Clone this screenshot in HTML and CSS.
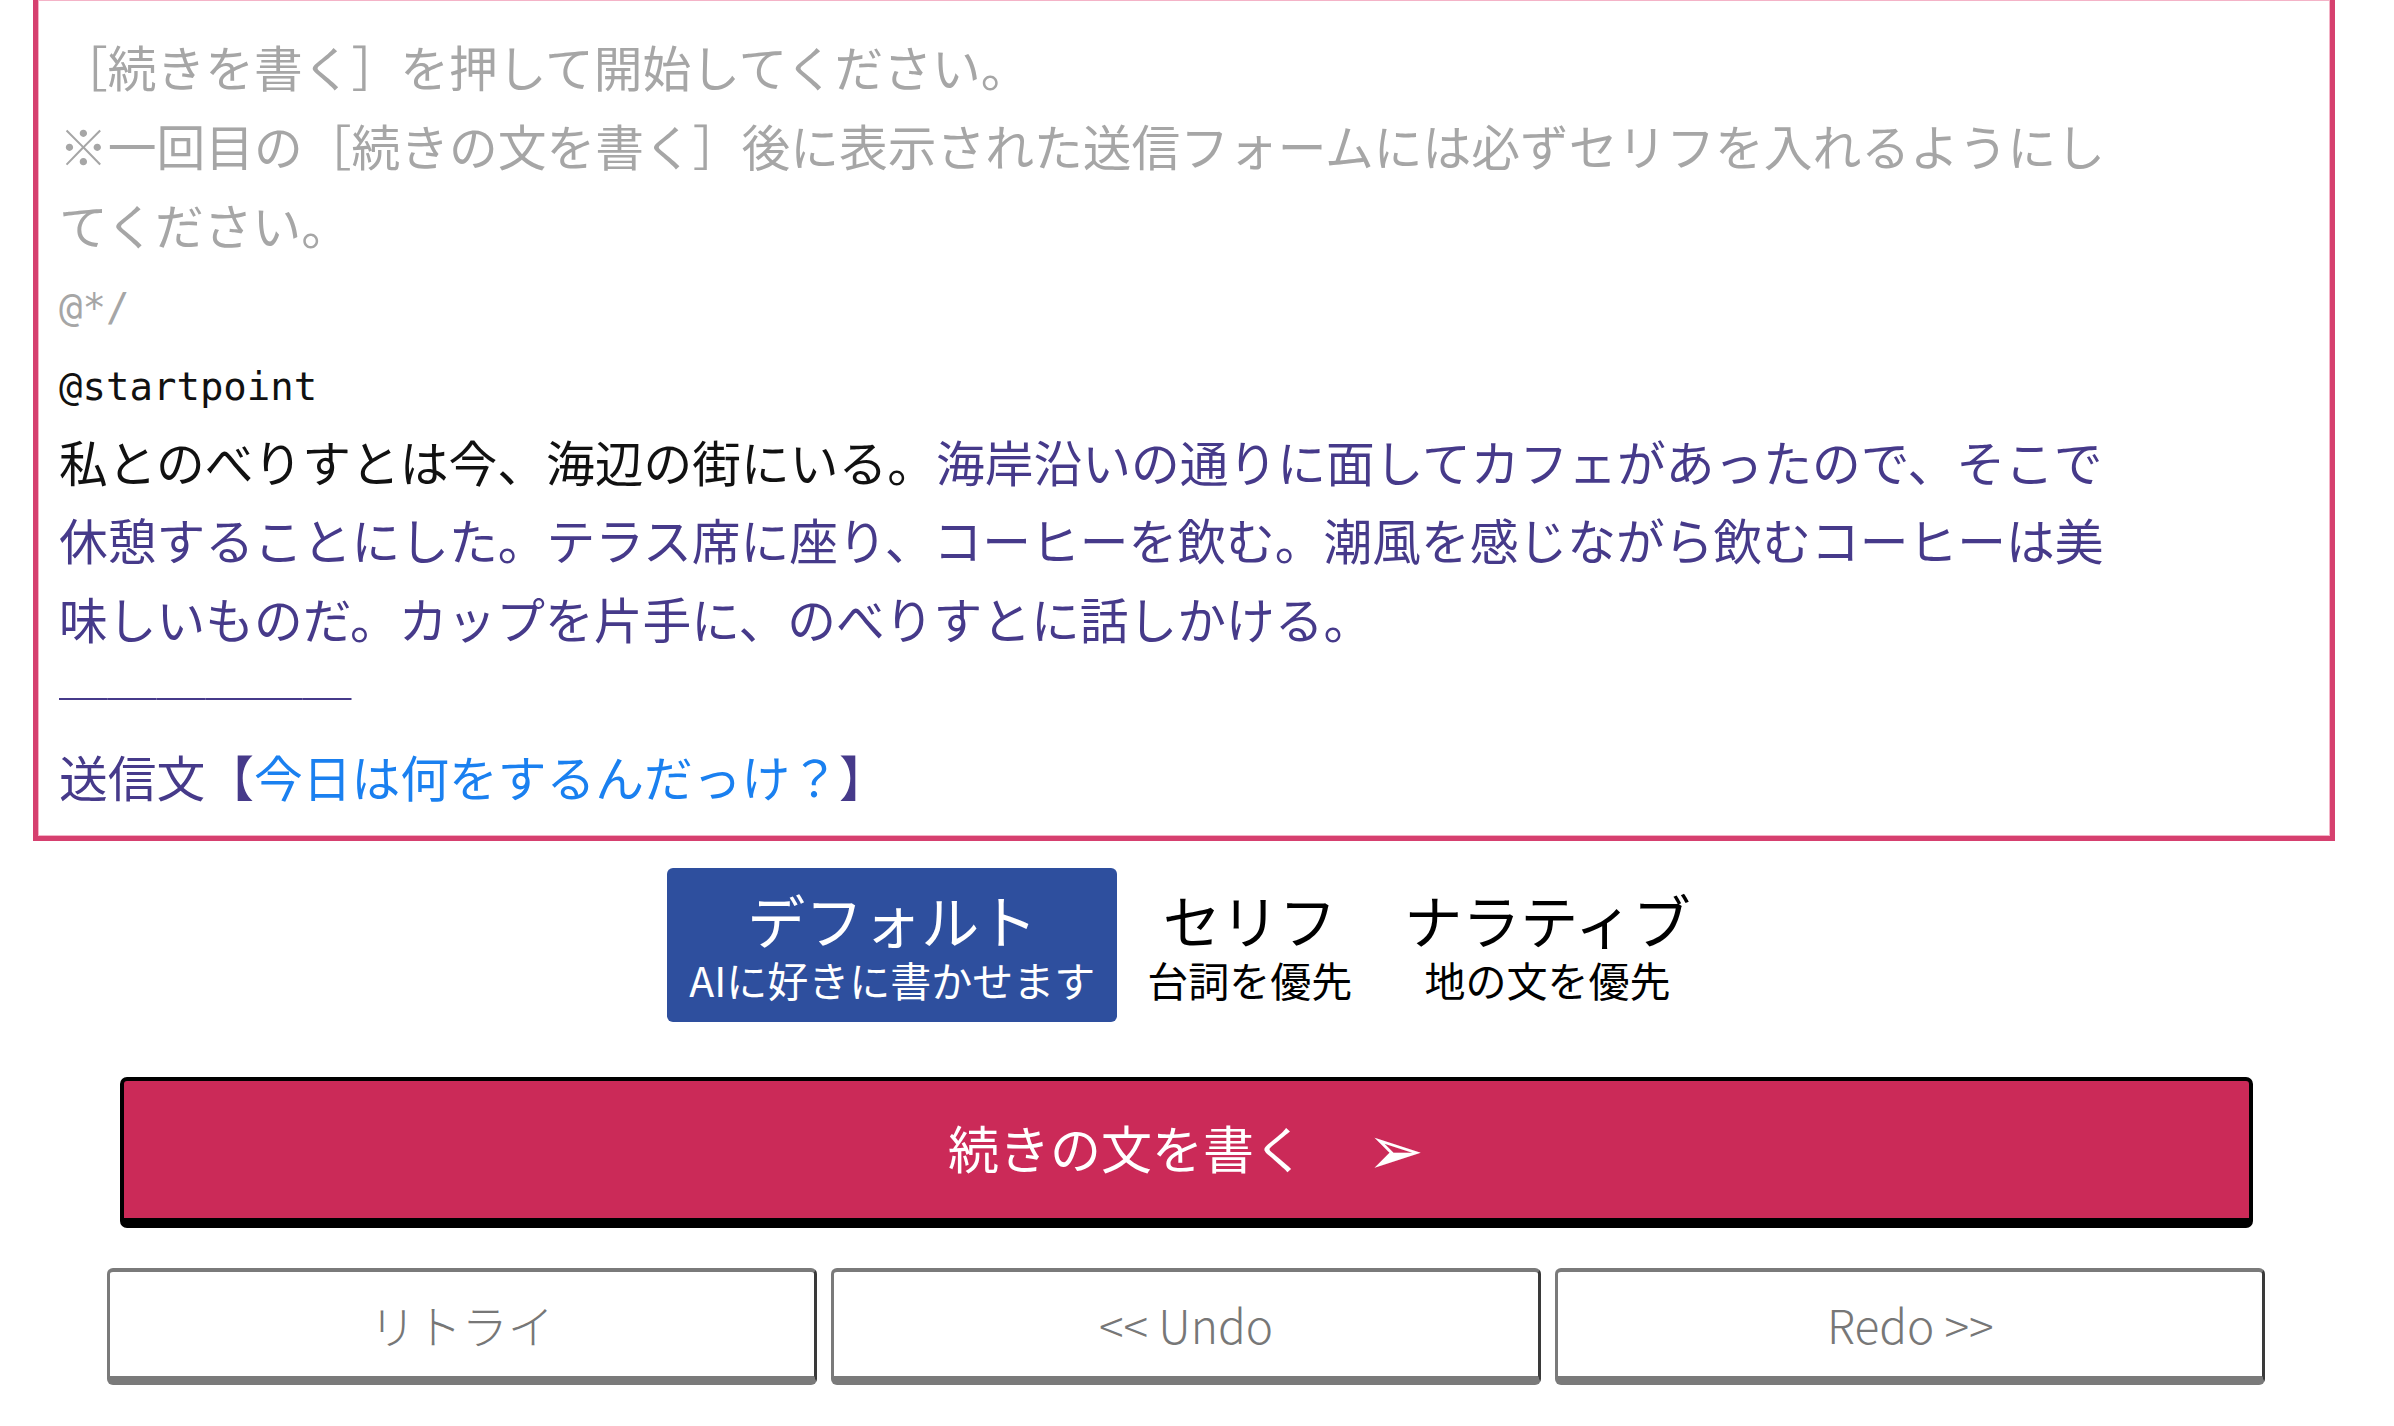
FILE: index.html
```html
<!DOCTYPE html>
<html>
  <head>
    <meta charset="utf-8">
    <title>のべりすと</title>
    <link rel="stylesheet" href="styles.css">
  </head>
  <body>
    <div class="page">
      <div class="editor">
        <div class="note">［続きを書く］を押して開始してください。</div>
        <div class="note">※一回目の［続きの文を書く］後に表示された送信フォームには必ずセリフを入れるようにしてください。</div>
        <div class="note mono">@*/</div>
        <div class="mono">@startpoint</div>
        <div class="story">私とのべりすとは今、海辺の街にいる。<span class="ai">海岸沿いの通りに面してカフェがあったので、そこで休憩することにした。テラス席に座り、コーヒーを飲む。潮風を感じながら飲むコーヒーは美味しいものだ。カップを片手に、のべりすとに話しかける。</span></div>
        <div class="ai rule">──────</div>
        <div class="ai">送信文【<span class="send">今日は何をするんだっけ？</span>】</div>
      </div>

      <div class="modes">
        <div class="mode active">
          <div class="mode-name">デフォルト</div>
          <div class="mode-desc">AIに好きに書かせます</div>
        </div>
        <div class="mode">
          <div class="mode-name">セリフ</div>
          <div class="mode-desc">台詞を優先</div>
        </div>
        <div class="mode">
          <div class="mode-name">ナラティブ</div>
          <div class="mode-desc">地の文を優先</div>
        </div>
      </div>

      <button class="write">続きの文を書く<span class="arrow">➢</span></button>

      <div class="actions">
        <button class="sub">リトライ</button>
        <button class="sub">&lt;&lt; Undo</button>
        <button class="sub">Redo &gt;&gt;</button>
      </div>
    </div>
  </body>
</html>
```

FILE: styles.css
```css
* {
  margin:0;
  padding:0;
  box-sizing: border-box;
}
body {
  background: #fff;
  font-family: "Noto Sans CJK JP", "Noto Sans", sans-serif;
  color: #111;
}
.page {
  width: 2372px;
  padding: 0 33px 40px 33px;
}

/* text area, scrolled so its top edge is out of view */
.editor {
  margin-right: 4px;
  padding: 27px 189px 20px 21px;
  border: 5px solid #d6406f;
  border-top: none;
  box-shadow: inset 0 0 0 1px #f4b3c7;
  font-size: 48.75px;
  line-height: 78.9px;
}
.note {
  color: #a6a6a6;
}
.mono {
  font-family: "DejaVu Sans Mono", monospace;
  font-size: 39px;
  padding-top: 10px;
  line-height: 68.9px;
}
.ai {
  color: #463a8a;
}
.rule {
  font-weight: 300;
}
.send {
  color: #1a80f0;
}

.modes {
  display: flex;
  justify-content: center;
  gap: 8px;
  margin-top: 27px;
  padding-left: 8px;
}
.mode {
  padding: 19px 22px 15px;
  border-radius: 6px;
  text-align: center;
  color: #000;
}
.mode.active {
  background: #2e4f9e;
  color: #fff;
}
.mode-name {
  font-size: 58px;
  line-height: 64px;
}
.mode-desc {
  font-size: 41px;
  line-height: 56px;
}

.write {
  display: block;
  width: 2133px;
  height: 151px;
  margin: 55px auto 0;
  border: 4px solid #000;
  border-bottom-width: 10px;
  border-radius: 7px;
  background: #cb2a58;
  color: #fff;
  font-family: inherit;
  font-size: 51px;
}
.write .arrow {
  margin-left: 62px;
  font-family: "DejaVu Sans", sans-serif;
  font-size: 68px;
  vertical-align: -5px;
}

.actions {
  display: flex;
  gap: 14px;
  width: 2159px;
  margin: 40px auto 0;
}
.sub {
  flex: 1;
  height: 117px;
  border: 3px solid #7a7a7a;
  border-top-width: 4px;
  border-bottom-width: 9px;
  border-right-color: #3a3a3a;
  border-radius: 6px;
  background: #fff;
  color: #777;
  font-family: inherit;
  font-size: 46px;
  font-weight: 300;
}
```
